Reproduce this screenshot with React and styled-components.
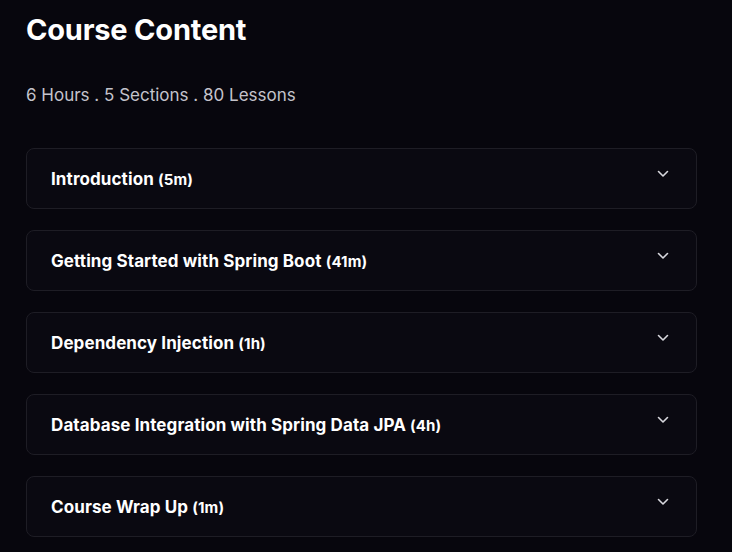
import styled, { createGlobalStyle } from 'styled-components';

const GlobalStyle = createGlobalStyle`
    body {
        margin: 0;
        background-color: #07060d;
        font-family: Inter, "Noto Sans", sans-serif;
        color: #fff;
    }
`

const sections = [
    { title: 'Introduction', time: '5m' },
    { title: 'Getting Started with Spring Boot', time: '41m' },
    { title: 'Dependency Injection', time: '1h' },
    { title: 'Database Integration with Spring Data JPA', time: '4h' },
    { title: 'Course Wrap Up', time: '1m' },
];

function Chevron() {
    return (
        <svg width="12" height="8" viewBox="0 0 12 8" fill="none">
            <path d="M1.5 1.5L6 6L10.5 1.5" stroke="#d8d8de" strokeWidth="1.6" strokeLinecap="round" strokeLinejoin="round" />
        </svg>
    )
}

export default function App() {
    return (
        <Page>
            <GlobalStyle />
            <Title>Course Content</Title>
            <Summary>6 Hours . 5 Sections . 80 Lessons</Summary>
            <List>
                {sections.map(s => (
                    <Section key={s.title}>
                        <Name>{s.title} <Time>({s.time})</Time></Name>
                        <Toggle><Chevron /></Toggle>
                    </Section>
                ))}
            </List>
        </Page>
    )
}

const Page = styled.div`
    box-sizing: border-box;
    width: 732px;
    min-height: 552px;
    padding: 12px 35px 0 26px;
`
const Title = styled.h1`
    margin: 0;
    font-size: 29px;
    font-weight: 700;
    line-height: 36px;
    letter-spacing: -0.2px;
`
const Summary = styled.p`
    margin: 35px 0 0;
    font-size: 17px;
    line-height: 24px;
    color: #c4c3cb;
`
const List = styled.div`
    display: flex;
    flex-direction: column;
    gap: 21px;
    margin-top: 41px;
`
const Section = styled.div`
    display: flex;
    justify-content: space-between;
    align-items: flex-start;
    height: 61px;
    box-sizing: border-box;
    padding: 0 27px 0 24px;
    background-color: #0a0911;
    border: 1px solid #1e1d25;
    border-radius: 8px;
`
const Name = styled.div`
    margin-top: 19px;
    font-size: 17px;
    font-weight: 700;
    line-height: 22px;
    letter-spacing: 0.1px;
`
const Time = styled.span`
    font-size: 15px;
`
const Toggle = styled.div`
    margin-top: 21px;
    display: flex;
`
